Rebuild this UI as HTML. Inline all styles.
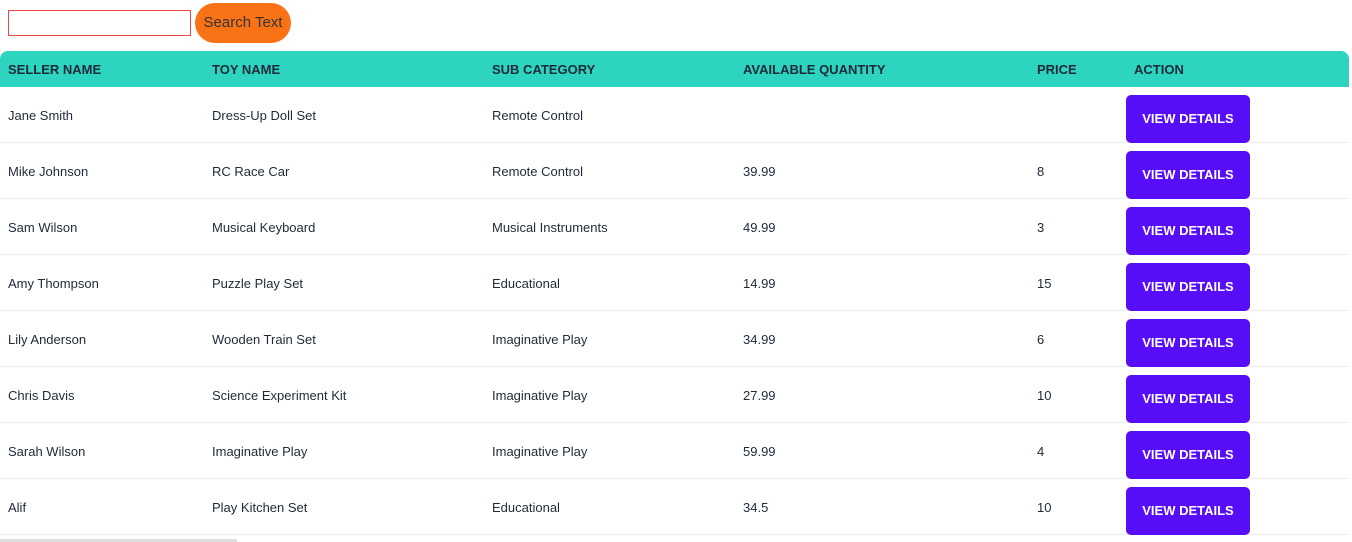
<!DOCTYPE html>
<html><head><style>
body{margin:0;width:1352px;height:542px;overflow:hidden;background:#fff;font-family:"Liberation Sans",sans-serif;color:#1f2937;position:relative}
#inp{position:absolute;left:8px;top:10px;width:183px;height:26px;border:1px solid #ef4444;box-sizing:border-box}
#btn{position:absolute;left:195px;top:3px;width:96px;height:40px;border-radius:20px;background:#f97316;color:#333;font-size:15px;line-height:40px;text-align:center}
.hdr{position:absolute;left:0;top:51px;width:1349px;height:36px;background:#2dd4bf;border-radius:8px 8px 0 0}
.c{position:absolute;font-size:13px;white-space:nowrap}
.h{font-weight:bold;font-size:13px;top:62px}
.row{position:absolute;left:0;width:1349px;height:56px;border-bottom:1px solid #ececec;box-sizing:border-box}
.vb{position:absolute;left:1126px;width:124px;height:48px;background:#570df8;border-radius:5px;color:#fff;font-weight:bold;font-size:13px;line-height:48px;text-align:center}
</style></head><body>
<div id="inp"></div><div id="btn">Search Text</div>
<div class="hdr"></div>
<div class="c h" style="left:8px">SELLER NAME</div>
<div class="c h" style="left:212px">TOY NAME</div>
<div class="c h" style="left:492px">SUB CATEGORY</div>
<div class="c h" style="left:743px">AVAILABLE QUANTITY</div>
<div class="c h" style="left:1037px">PRICE</div>
<div class="c h" style="left:1134px">ACTION</div>
<div id="rows"></div>
<div style="position:absolute;left:0;top:539px;width:237px;height:3px;background:#ddd"></div>
<script>
var d=[["Jane Smith","Dress-Up Doll Set","Remote Control","",""],["Mike Johnson","RC Race Car","Remote Control","39.99","8"],["Sam Wilson","Musical Keyboard","Musical Instruments","49.99","3"],["Amy Thompson","Puzzle Play Set","Educational","14.99","15"],["Lily Anderson","Wooden Train Set","Imaginative Play","34.99","6"],["Chris Davis","Science Experiment Kit","Imaginative Play","27.99","10"],["Sarah Wilson","Imaginative Play","Imaginative Play","59.99","4"],["Alif","Play Kitchen Set","Educational","34.5","10"]];
var xs=[8,212,492,743,1037],h="";
d.forEach(function(r,i){var t=87+i*56;h+='<div class="row" style="top:'+t+'px"></div>';r.forEach(function(v,j){h+='<div class="c" style="left:'+xs[j]+'px;top:'+(t+21)+'px">'+v+'</div>'});h+='<div class="vb" style="top:'+(t+8)+'px">VIEW DETAILS</div>'});
document.getElementById("rows").innerHTML=h;
</script>
</body></html>
